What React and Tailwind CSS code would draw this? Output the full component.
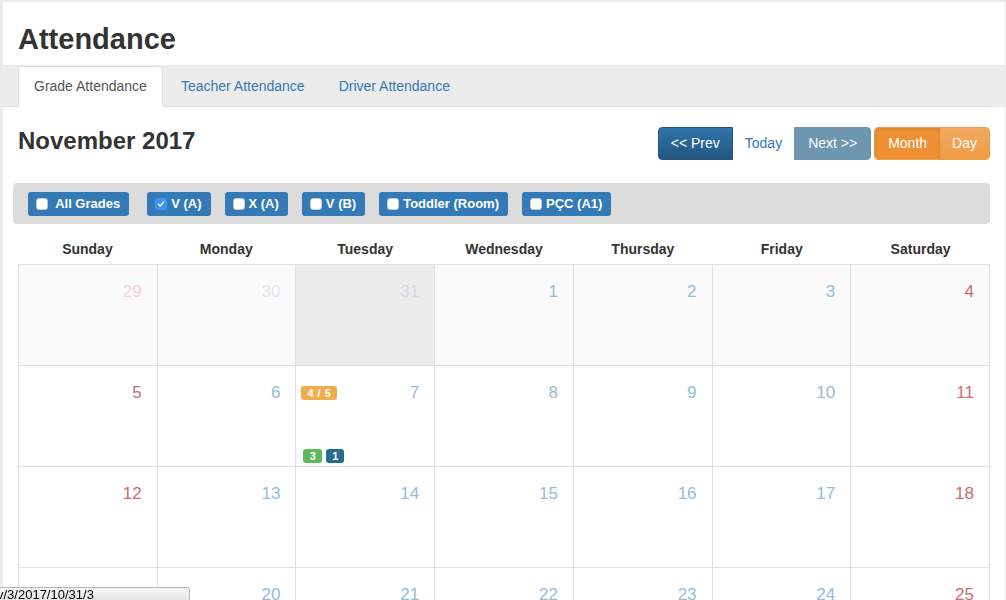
import React from "react";

const FONT = { fontFamily: '"Liberation Sans", Arial, sans-serif' };

function Check({ checked }) {
  if (checked) {
    return (
      <span className="inline-flex h-[12px] w-[12px] items-center justify-center rounded-[3px] bg-[#3f94f4]">
        <svg width="8" height="8" viewBox="0 0 8 8">
          <path d="M1.3 4.2 L3.2 6 L6.8 1.8" fill="none" stroke="white" strokeWidth="1.2" strokeLinecap="round" strokeLinejoin="round" />
        </svg>
      </span>
    );
  }
  return <span className="inline-block h-[12px] w-[12px] rounded-[3px] border border-[#c8c8c8] bg-white" />;
}

function FilterBtn({ label, checked, first }) {
  return (
    <div
      className={
        "flex h-[24px] items-center rounded-[3px] bg-[#337ab7] pl-[8px] pr-[9px] text-[13px] font-bold text-white " +
        (first ? "mr-[18px]" : "mr-[14px]")
      }
    >
      <Check checked={checked} />
      <span className="ml-[4px] whitespace-pre">{label}</span>
    </div>
  );
}

const weeks = [
  [
    { d: 29, out: true },
    { d: 30, out: true },
    { d: 31, out: true, hover: true },
    { d: 1 },
    { d: 2 },
    { d: 3 },
    { d: 4 },
  ],
  [{ d: 5 }, { d: 6 }, { d: 7, events: true }, { d: 8 }, { d: 9 }, { d: 10 }, { d: 11 }],
  [{ d: 12 }, { d: 13 }, { d: 14 }, { d: 15 }, { d: 16 }, { d: 17 }, { d: 18 }],
  [{ d: 19 }, { d: 20 }, { d: 21 }, { d: 22 }, { d: 23 }, { d: 24 }, { d: 25 }],
  [{ d: 26 }, { d: 27 }, { d: 28 }, { d: 29 }, { d: 30 }, { d: 1, out: true }, { d: 2, out: true }],
];

function numColor(i, out) {
  const weekend = i === 0 || i === 6;
  if (out) return weekend ? "text-[#f1d6d7]" : "text-[#dfe8f1]";
  return weekend ? "text-[#c86c70]" : "text-[#93bcdd]";
}

function Cell({ c, i, rowIdx }) {
  const bg = c.hover ? "bg-[#ebebeb]" : rowIdx === 0 ? "bg-[#fafafa]" : "bg-white";
  const col = c.hover ? "text-[#d4dde6]" : numColor(i, c.out);
  return (
    <div className={"flex h-[101px] flex-col border-b border-r border-[#e1e1e1] " + bg}>
      <div className="flex items-center justify-between pt-[17px] pr-[15px]">
        {c.events ? (
          <span className="ml-[5px] flex h-[14px] items-center rounded-[3px] bg-[#f0ad4e] px-[6px] text-[11px] font-bold leading-none tracking-[0.5px] text-white">
            4 / 5
          </span>
        ) : (
          <span />
        )}
        <span className={"text-[17px] leading-[20px] " + col}>{c.d}</span>
      </div>
      {c.events && (
        <div className="mt-auto mb-[3px] ml-[7px] flex gap-[4px]">
          <span className="flex h-[14px] w-[19px] items-center justify-center rounded-[3px] bg-[#5cb85c] text-[11px] font-bold leading-none text-white">
            3
          </span>
          <span className="flex h-[14px] w-[18px] items-center justify-center rounded-[3px] bg-[#286e8c] text-[11px] font-bold leading-none text-white">
            1
          </span>
        </div>
      )}
    </div>
  );
}

export default function App() {
  const days = ["Sunday", "Monday", "Tuesday", "Wednesday", "Thursday", "Friday", "Saturday"];
  return (
    <div className="relative min-h-screen bg-[#ebebeb] pl-[3px] pr-[1px] pt-[2px] text-[#333]" style={FONT}>
      <div className="bg-white pb-[40px]">
        {/* header */}
        <div className="h-[63px] px-[15px] pt-[21px]">
          <h1 className="text-[29px] font-bold leading-[32px] text-[#333]">Attendance</h1>
        </div>

        {/* tabs */}
        <div className="bg-[#ececec] pr-[15px] pt-[1px]">
          <ul className="flex border-b border-[#dddddd] pl-[15px] text-[14px]">
            <li className="-mb-px mr-[2px] flex h-[41px] items-center rounded-t-[4px] border border-[#dddddd] border-b-white bg-white px-[15px] text-[#555]">
              Grade Attendance
            </li>
            <li className="mr-[2px] flex h-[40px] items-center border border-transparent px-[15px] text-[#337ab7]">
              Teacher Attendance
            </li>
            <li className="mr-[2px] flex h-[40px] items-center border border-transparent px-[15px] text-[#337ab7]">
              Driver Attendance
            </li>
          </ul>
        </div>

        {/* content */}
        <div className="px-[15px] pt-[20px]">
          <div className="flex items-start justify-between">
            <h2 className="text-[24px] font-bold leading-[28px] text-[#333]">November 2017</h2>
            <div className="flex items-center text-[14px]">
              <div className="flex h-[33px] items-center rounded-l-[4px] border border-[#245580] bg-gradient-to-b from-[#3073ab] to-[#245682] px-[12px] text-white">
                &lt;&lt; Prev
              </div>
              <div className="flex h-[33px] items-center px-[12px] text-[#337ab7]">Today</div>
              <div className="flex h-[33px] items-center rounded-r-[4px] border border-[#6e96b0] bg-[#6e96b0] px-[13px] text-white">
                Next &gt;&gt;
              </div>
              <div className="ml-[3px] flex h-[33px] overflow-hidden rounded-[4px] border border-[#eb9a48]">
                <div className="flex items-center bg-[#ee9033] px-[13px] text-white shadow-[inset_0_2px_4px_rgba(0,0,0,0.08)]">
                  Month
                </div>
                <div className="flex items-center bg-gradient-to-b from-[#f2a95e] to-[#ef9b44] px-[12px] text-white">
                  Day
                </div>
              </div>
            </div>
          </div>

          {/* filters */}
          <div className="ml-[-5px] mt-[23px] flex h-[41px] items-center rounded-[4px] bg-[#dcdcdc] pl-[15px]">
            <FilterBtn label={" All Grades"} first />
            <FilterBtn label="V (A)" checked />
            <FilterBtn label="X (A)" />
            <FilterBtn label="V (B)" />
            <FilterBtn label="Toddler (Room)" />
            <FilterBtn label="PÇC (A1)" />
          </div>

          {/* day headers */}
          <div className="mt-[16px] grid grid-cols-7 pb-[6px] text-center text-[14px] font-bold leading-[18px] text-[#333]">
            {days.map((d) => (
              <div key={d}>{d}</div>
            ))}
          </div>

          {/* grid */}
          <div className="border-l border-t border-[#e1e1e1]">
            {weeks.map((w, r) => (
              <div key={r} className="grid grid-cols-7">
                {w.map((c, i) => (
                  <Cell key={i} c={c} i={i} rowIdx={r} />
                ))}
              </div>
            ))}
          </div>
        </div>
      </div>

      {/* browser status bar */}
      <div className="fixed bottom-0 left-0 h-[13px] w-[190px] overflow-hidden rounded-tr-[4px] border-r border-t border-[#b9b9b9] bg-gradient-to-b from-[#f7f7f7] to-[#e6e6e6]">
        <div className="ml-[-3px] whitespace-nowrap text-[13px] leading-[14px] text-black">v/3/2017/10/31/3</div>
      </div>
    </div>
  );
}
